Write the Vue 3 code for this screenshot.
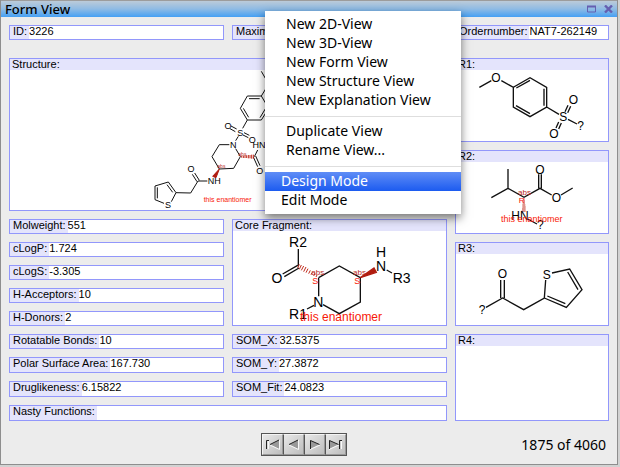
<script setup>
import { ref } from 'vue'

const topFields = [
  { id: 'id', label: 'ID:', value: '3226' },
  { id: 'maximum', label: 'Maximum:', value: '' },
  { id: 'order', label: 'Ordernumber:', value: 'NAT7-262149' },
]

const fields = [
  { id: 'weight', label: 'Molweight:', value: '551' },
  { id: 'clogp', label: 'cLogP:', value: '1.724' },
  { id: 'clogs', label: 'cLogS:', value: '-3.305' },
  { id: 'acceptors', label: 'H-Acceptors:', value: '10' },
  { id: 'donors', label: 'H-Donors:', value: '2' },
  { id: 'rotatable', label: 'Rotatable Bonds:', value: '10' },
  { id: 'polar', label: 'Polar Surface Area:', value: '167.730' },
  { id: 'drug', label: 'Druglikeness:', value: '6.15822' },
  { id: 'nasty', label: 'Nasty Functions:', value: '' },
  { id: 'somx', label: 'SOM_X:', value: '32.5375' },
  { id: 'somy', label: 'SOM_Y:', value: '27.3872' },
  { id: 'somfit', label: 'SOM_Fit:', value: '24.0823' },
]

const menu = [
  ['New 2D-View', 'New 3D-View', 'New Form View', 'New Structure View', 'New Explanation View'],
  ['Duplicate View', 'Rename View...'],
  ['Design Mode', 'Edit Mode'],
]
const active = ref('Design Mode')
</script>

<template>
  <main class="window">
    <header class="titlebar">
      <h1>Form View</h1>
      <div class="controls">
        <button aria-label="Maximize">
          <svg width="9" height="8" viewBox="0 0 9 8"><path d="M.5 1v6h8V1" /><path d="M0 1.5h9" stroke-width="2" /></svg>
        </button>
        <button aria-label="Close">
          <svg width="9" height="8" viewBox="0 0 9 8"><path d="M1 .5l7 7M8 .5l-7 7" stroke-width="2.4" /></svg>
        </button>
      </div>
    </header>

    <section class="grid top">
      <div v-for="f in topFields" :key="f.id" class="field">
        <label :for="f.id">{{ f.label }}</label>
        <input :id="f.id" :value="f.value" readonly />
      </div>
    </section>

    <section class="grid details">
      <figure class="panel structure">
        <figcaption>Structure:</figcaption>
        <svg viewBox="-390 30 1308 420" class="fine">
          <path d="M364 34l22 38M386 72l-22 36M364 108h-42l-21 37 21 35h42l22-35-22-37M359 116h-32M310 145l16 27M360 173l17-28M322 180l-14 25M273 198l17 9M270 206l16 9M312 218l16 8M309 225l16 8M295 229l-8 13M268 254h-30l-22 36 22 37 43-2 20-35-14-24M343 290l10-20M340 291l13 29M347 288l13 29M202 363h-28l-22 36-44-1M171 365l-14-22M178 361l-14-22M108 398l-23-32-40 12v41l27 11M94 425l14-27M98 397l-17-23M52 382v33" />
          <path class="wedge" d="M238 327l-20 22 10 4z" />
          <path class="hash" d="M305 288v5M310 287v7M315 286v8M320 286v8M325 285v10M330 285v10M335 284v12M340 284v12" />
          <g class="atoms small" text-anchor="middle">
            <text x="301" y="227">S</text><text x="264" y="207">O</text><text x="337" y="249">O</text>
            <text x="280" y="263">N</text><text x="357" y="263">HN</text><text x="359" y="342">O</text>
            <text x="223" y="372">NH</text><text x="153" y="337">O</text><text x="84" y="443">S</text>
          </g>
          <g class="stereo tiny"><text x="295" y="288">abs</text><text x="232" y="324">abs</text></g>
          <text class="note small" x="191" y="427">this enantiomer</text>
        </svg>
      </figure>

      <div v-for="f in fields" :key="f.id" class="field" :class="f.id">
        <label :for="f.id">{{ f.label }}</label>
        <input :id="f.id" :value="f.value" readonly />
      </div>

      <figure class="panel core">
        <figcaption>Core Fragment:</figcaption>
        <svg viewBox="24 57 639 282">
          <path d="M220 111v52M218 160l-45 26M222 168l-44 26M281 197l62-35 63 35v73l-63 35-49-27M281 197v56M267 280l-21 11M485 174l16 9" />
          <path class="wedge" d="M406 197l41-29 7 13z" />
          <path class="hash" d="M223 157l-5 11M229 159l-6 13M236 162l-7 13M243 165l-7 14M249 170l-6 12M256 175l-5 10M263 179l-5 9M270 184l-4 8M276 189l-3 6" />
          <g class="atoms large" text-anchor="middle">
            <text x="219" y="106">R2</text><text x="156" y="214">O</text><text x="280" y="285">N</text>
            <text x="219" y="320">R1</text><text x="468" y="178">N</text><text x="468" y="136">H</text>
            <text x="530" y="213">R3</text>
          </g>
          <g class="stereo"><text x="259" y="189">abs</text><text x="384" y="189">abs</text></g>
          <g class="note medium"><text x="262" y="215">S</text><text x="388" y="215">S</text></g>
          <text class="note large" x="225" y="328">this enantiomer</text>
        </svg>
      </figure>

      <figure class="panel r1">
        <figcaption>R1:</figcaption>
        <svg viewBox="18 60 456 213">
          <path d="M88 112l36-20M154 92l36 20 50-29 50 29v59l-50 29-50-29v-59M199 114l41-23M282 116v51M240 191l-42-24M290 171l37 22M345 185l9-19M353 188l9-19M326 216l-8 18M334 219l-8 18M354 208l27 14" />
          <g class="atoms" text-anchor="middle">
            <text x="138" y="96">O</text><text x="340" y="214">S</text><text x="370" y="162">O</text>
            <text x="312" y="263">O</text><text x="392" y="241">?</text>
          </g>
        </svg>
      </figure>

      <figure class="panel r2">
        <figcaption>R2:</figcaption>
        <svg viewBox="18 51 456 213">
          <path d="M174 72v58l-50 28M174 130l48 27 48-27 35 20M266 130V88M274 130V88M333 150l35-21M233 222l28 15" />
          <path class="hash" d="M220 162h4M219 168h6M218 174h7M217 180h9M217 186h10M216 192h11M215 198h12" />
          <g class="atoms" text-anchor="middle">
            <text x="270" y="86">O</text><text x="319" y="170">O</text><text x="210" y="226">HN</text><text x="271" y="253">?</text>
          </g>
          <text class="stereo" x="204" y="149">abs</text>
          <text class="note" x="206" y="174">R</text>
          <text class="note medium" x="153" y="232">this enantiomer</text>
        </svg>
      </figure>

      <figure class="panel r3">
        <figcaption>R3:</figcaption>
        <svg viewBox="18 54 456 213">
          <path d="M152 132v54M163 132v54M108 214l50-28 63 35 62-35 4-54M306 111l53-12 37 62-47 53-66-28M353 108l31 53M292 180l54 23" />
          <g class="atoms" text-anchor="middle">
            <text x="157" y="127">O</text><text x="290" y="129">S</text><text x="96" y="235">?</text>
          </g>
        </svg>
      </figure>

      <figure class="panel r4">
        <figcaption>R4:</figcaption>
      </figure>
    </section>

    <footer>
      <nav aria-label="Records">
        <button aria-label="First record"><svg width="15" height="11" viewBox="0 0 15 11"><path class="tri" d="M14 1v9L5 5.500z" /><path class="light" d="M14.500 1v9.500L5 6M3.500 2v8" /><path d="M4 1.500H1.500V10M14 1L5 5.500" /></svg></button>
        <button aria-label="Previous record"><svg width="15" height="11" viewBox="0 0 15 11"><path class="tri" d="M12 1v9L3 5.500z" /><path class="light" d="M12.500 1v9.500L3 6" /><path d="M12 1L3 5.500" /></svg></button>
        <button aria-label="Next record"><svg width="15" height="11" viewBox="0 0 15 11"><path class="tri" d="M3 1v9l9-4.500z" /><path class="light" d="M3 10.500L13 6" /><path d="M3.500 10V1.500l9 4" /></svg></button>
        <button aria-label="Last record"><svg width="15" height="11" viewBox="0 0 15 11"><path class="tri" d="M1 1v9l9-4.500z" /><path class="light" d="M1 10.500L11 6M13.500 2v8" /><path d="M1.500 10V1.500l9 4M14 1.500h-2.500V10" /></svg></button>
      </nav>
      <p>1875 of 4060</p>
    </footer>

    <div class="menu" role="menu">
      <div v-for="(group, i) in menu" :key="i" class="group" :class="{ modes: i === 2 }" role="group">
        <button
          v-for="item in group"
          :key="item"
          role="menuitem"
          :class="{ active: item === active }"
          @mouseenter="active = item"
        >{{ item }}</button>
      </div>
    </div>
  </main>
</template>

<style>
body {
  background: #d2d2d2;
}
</style>

<style scoped>
* {
  box-sizing: border-box;
}
.window {
  position: relative;
  margin-right: 2px;
  border: 1px solid #8e8e8e;
  border-top: 0;
  background: #ececec;
  color: #000;
  font: 11px/13px "Liberation Sans", Arial, sans-serif;
}
button {
  margin: 0;
  padding: 0;
  border: 0;
  background: none;
  color: inherit;
  font: inherit;
}
.titlebar {
  display: flex;
  align-items: center;
  justify-content: space-between;
  height: 17px;
  padding: 0 4px;
  border-top: 1px solid #9c9c9c;
  background: linear-gradient(#bccbd9, #8fbbe4 50%, #45a0f4);
}
h1 {
  margin: 0;
  font: 500 13px/16px "Noto Sans", sans-serif;
}
.controls {
  display: flex;
  gap: 8px;
}
.controls button {
  display: flex;
}
.controls svg {
  fill: none;
  stroke: #655fb0;
}
.grid {
  display: grid;
  grid-template-columns: 215fr 215fr 154fr;
  gap: 8px;
  padding: 0 8px;
}
.top {
  padding-top: 8px;
  padding-bottom: 18px;
}
.details {
  grid-template-rows: 84px 61px repeat(6, 15px) repeat(3, 16px);
}
.field {
  display: flex;
  align-items: stretch;
  min-width: 0;
  height: 100%;
  min-height: 15px;
  border: 1px solid #9297fb;
  background: #fff;
  grid-column: 1;
}
.top .field {
  grid-column: auto;
}
.field label {
  flex: none;
  padding: 0 2px 0 3px;
  background: #e4e4fc;
  line-height: 11px;
  white-space: nowrap;
}
.field input {
  flex: 1;
  min-width: 0;
  height: 13px;
  margin: -1px 0 0;
  padding: 0;
  border: 0;
  outline: 0;
  background: none;
  color: inherit;
  font: inherit;
}
.details .nasty {
  grid-column: 1 / 3;
  grid-row: 11;
}
.weight { grid-row: 3; }
.clogp { grid-row: 4; }
.clogs { grid-row: 5; }
.acceptors { grid-row: 6; }
.donors { grid-row: 7; }
.rotatable { grid-row: 8; }
.polar { grid-row: 9; }
.drug { grid-row: 10; }
.details .somx { grid-area: 8 / 2; }
.details .somy { grid-area: 9 / 2; }
.details .somfit { grid-area: 10 / 2; }
.panel {
  display: flex;
  flex-direction: column;
  min-width: 0;
  min-height: 0;
  margin: 0;
  border: 1px solid #9297fb;
  background: #fff;
}
.structure { grid-area: 1 / 1 / 3 / 3; }
.core { grid-area: 3 / 2 / 8 / 3; }
.r1 { grid-area: 1 / 3; }
.r2 { grid-area: 2 / 3 / 4 / 4; }
.r3 { grid-area: 4 / 3 / 8 / 4; }
.r4 { grid-area: 8 / 3 / 12 / 4; }
figcaption {
  flex: none;
  height: 11px;
  padding-left: 2px;
  background: #e4e4fc;
  line-height: 11px;
}
.panel svg {
  flex: 1;
  width: 100%;
  min-height: 0;
  fill: none;
  stroke: #111;
  stroke-width: 4;
}
.panel svg.fine {
  stroke-width: 3;
}
.panel .wedge {
  fill: #b01c10;
  stroke: #b01c10;
}
.panel .hash {
  stroke: #c02a1c;
  stroke-width: 3;
}
.panel text {
  stroke: none;
}
.atoms {
  fill: #000;
  font-size: 36px;
}
.atoms.large {
  font-size: 42px;
}
.atoms.small {
  font-size: 27px;
}
.stereo {
  fill: #b8281c;
  font-size: 24px;
}
.stereo.tiny {
  font-size: 15px;
}
.note {
  fill: #f81808;
  font-size: 24px;
}
.note.small {
  font-size: 21px;
}
.note.medium {
  font-size: 27px;
}
.note.large {
  font-size: 36px;
}
footer {
  display: grid;
  grid-template-columns: 1fr auto 1fr;
  align-items: center;
  padding: 12px 11px 8px 0;
}
nav {
  display: flex;
  grid-column: 2;
  border: 1px solid #555;
}
nav button {
  display: flex;
  align-items: center;
  justify-content: center;
  width: 21px;
  height: 21px;
  border: 1px solid;
  border-color: #f4f4f4 #999 #999 #f4f4f4;
  background: linear-gradient(135deg, #e8e8e8, #bdbdbd);
}
nav button + button {
  border-left-color: #555;
}
nav svg {
  fill: none;
  stroke: #222;
}
nav .tri {
  fill: #999;
  stroke: none;
}
nav .light {
  stroke: #f8f8f8;
}
footer p {
  margin: 0;
  font: 14px/18px "Noto Sans", sans-serif;
  text-align: right;
}
.menu {
  position: absolute;
  top: 11px;
  left: 264px;
  width: 196px;
  padding: 4px 0;
  background: #fff;
  box-shadow: 0 4px 9px rgba(0, 0, 0, 0.5);
  font: 14px/17px "Noto Sans", sans-serif;
}
.group + .group {
  margin-top: 6px;
  padding-top: 5px;
  border-top: 1px solid #dedede;
}
.menu button {
  display: block;
  width: 100%;
  height: 19px;
  padding: 0 0 2px 21px;
  text-align: left;
}
.menu .modes button {
  padding-left: 16px;
}
.menu .active {
  background: linear-gradient(#5f8df6, #1c5bf0);
  color: #fff;
}
</style>
